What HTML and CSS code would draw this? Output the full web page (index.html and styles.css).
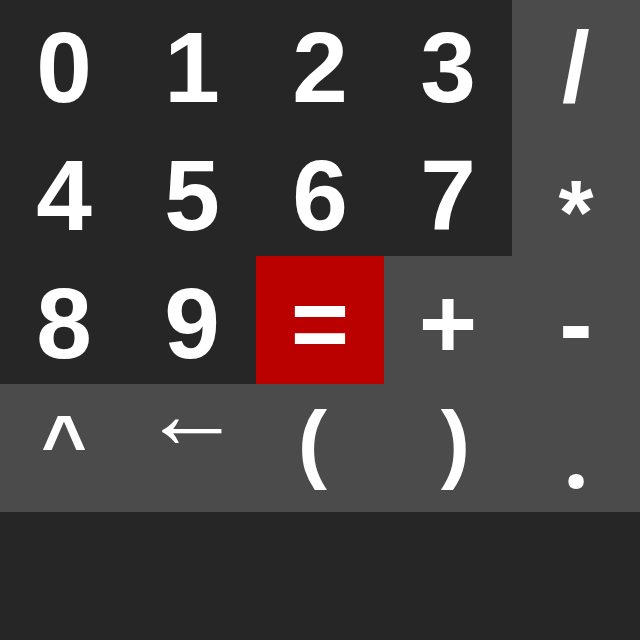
FILE: index.html
```html
<!DOCTYPE html>
<html>
<head>
<meta charset="utf-8">
<link rel="stylesheet" href="styles.css">
</head>
<body>
<div class="pad">
  <div class="key num">0</div>
  <div class="key num">1</div>
  <div class="key num">2</div>
  <div class="key num">3</div>
  <div class="key op">/</div>
  <div class="key num">4</div>
  <div class="key num">5</div>
  <div class="key num">6</div>
  <div class="key num">7</div>
  <div class="key op k-star">*</div>
  <div class="key num">8</div>
  <div class="key num">9</div>
  <div class="key eq">=</div>
  <div class="key op">+</div>
  <div class="key op">-</div>
  <div class="key op k-caret">^</div>
  <div class="key op k-arrow">←</div>
  <div class="key op k-lp">(</div>
  <div class="key op k-rp">)</div>
  <div class="key op k-dot">.</div>
</div>
</body>
</html>
```
FILE: styles.css
```css
html, body {
  margin: 0;
  padding: 0;
  background: #262626;
  width: 640px;
  height: 640px;
  overflow: hidden;
}
.pad {
  display: grid;
  grid-template-columns: repeat(5, 128px);
  grid-template-rows: repeat(4, 128px);
}
.key {
  box-sizing: border-box;
  display: flex;
  align-items: center;
  justify-content: center;
  padding-top: 5px;
  font-family: "Liberation Sans", Arial, sans-serif;
  font-weight: bold;
  font-size: 100px;
  line-height: 1;
  color: #ffffff;
}
.num { background: #262626; }
.op { background: #4b4b4b; }
.eq { background: #bb0000; }
.k-star {
  font-size: 90px;
  padding-top: 42px;
}
.k-caret {
  font-size: 78px;
  padding-top: 0;
  padding-bottom: 11px;
}
.k-arrow {
  font-weight: normal;
  padding-top: 0;
  padding-bottom: 70px;
}
.k-lp {
  font-size: 88px;
  padding-top: 0;
  padding-bottom: 12px;
  padding-right: 15px;
}
.k-rp {
  font-size: 88px;
  padding-top: 0;
  padding-bottom: 12px;
  padding-left: 15px;
}
.k-dot {
  font-family: "Open Sans", sans-serif;
  font-size: 90px;
  padding-top: 10px;
}
```
